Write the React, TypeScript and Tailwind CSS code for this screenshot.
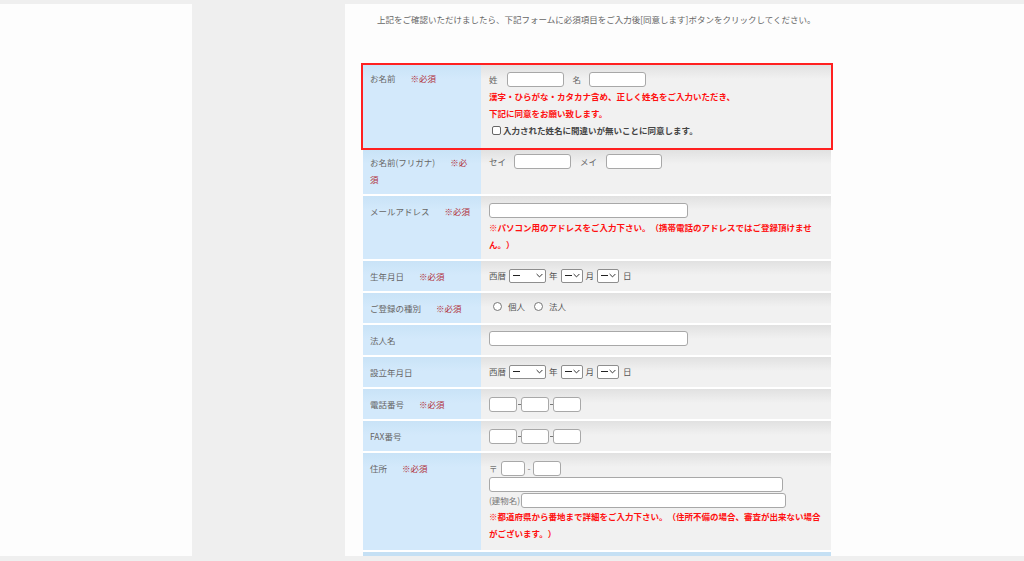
import React from "react";

type C = { children?: React.ReactNode };

const Inp = ({ cls }: { cls: string }) => (
  <span className={`inline-block h-[15px] shrink-0 rounded-[3px] border border-[#a8a8a8] bg-white ${cls}`} />
);

const Sel = ({ cls }: { cls: string }) => (
  <span className={`flex h-[14px] shrink-0 items-center justify-between rounded-[2px] border border-[#8e8e8e] bg-white pl-[3px] pr-[2px] ${cls}`}>
    <span className="h-[1.5px] w-[7px] bg-[#222]" />
    <svg width="7" height="5" viewBox="0 0 7 5">
      <path d="M0.6 1L3.5 3.9L6.4 1" stroke="#333" fill="none" strokeWidth="1" />
    </svg>
  </span>
);

const Req = () => <span className="ml-[15px] text-[#b0303a]">※必須</span>;

const Row = ({
  label,
  req,
  h,
  children,
  vcls = "",
  lcls = "pt-[7px]",
}: C & { label: string; req?: boolean; h: string; vcls?: string; lcls?: string }) => (
  <div className={`flex ${h}`}>
    <div className={`w-[118px] shrink-0 bg-[linear-gradient(#c9e3f7,#d3e9fb_14px)] pl-[7px] pr-[6px] leading-[17px] text-[#666] ${lcls}`}>
      {label}
      {req && <Req />}
    </div>
    <div className={`flex-1 bg-[linear-gradient(#e1e1e1,#f1f1f1_14px)] pl-[8px] pr-[8px] ${vcls}`}>{children}</div>
  </div>
);

const Red = ({ children }: C) => <div className="font-bold leading-[17px] text-[#ff1010]">{children}</div>;

const Dash = () => <span className="mx-[0.5px] h-px w-[3px] shrink-0 bg-[#777]" />;

const DateSel = () => (
  <div className="flex h-[17px] items-center text-[#555]">
    <span>西暦</span>
    <Sel cls="ml-[3px] w-[37px]" />
    <span className="ml-[3px]">年</span>
    <Sel cls="ml-[3px] w-[22px]" />
    <span className="ml-[3px]">月</span>
    <Sel cls="ml-[3px] w-[22px]" />
    <span className="ml-[4px]">日</span>
  </div>
);

const Radio = () => <span className="inline-block h-[9px] w-[9px] rounded-full border border-[#777] bg-white" />;

export default function App() {
  return (
    <div className="h-[561px] w-[1024px] overflow-hidden bg-[#efefef] pt-[4px] font-['Noto_Sans_CJK_JP','Noto_Sans',sans-serif] text-[8.5px] [text-spacing-trim:space-all]">
      <div className="flex h-[552px]">
        <div className="w-[192px] bg-[#fdfdfd]" />
        <div className="w-[153px]" />
        <div className="flex-1 overflow-hidden bg-[#fdfdfd]">
          <div className="pl-[32px] pt-[9px] leading-[12px] text-[#666]">
            上記をご確認いただけましたら、下記フォームに必須項目をご入力後[同意します]ボタンをクリックしてください。
          </div>
          <div className="ml-[18px] mt-[40px] flex w-[468px] flex-col gap-[2px] bg-white">
            <div className="outline-2 outline-[#ff2020]">
              <Row label="お名前" req h="h-[83px]" vcls="pt-[6px]" lcls="pt-[5px]">
                <div className="flex h-[17px] items-center text-[#666]">
                  <span>姓</span>
                  <Inp cls="ml-[9px] w-[57px]" />
                  <span className="ml-[9px]">名</span>
                  <Inp cls="ml-[8px] w-[57px]" />
                </div>
                <Red>漢字・ひらがな・カタカナ含め、正しく姓名をご入力いただき、</Red>
                <Red>下記に同意をお願い致します。</Red>
                <div className="flex h-[17px] items-center font-bold text-[#444]">
                  <span className="ml-[3px] mr-[2px] inline-block h-[9px] w-[9px] rounded-[2px] border border-[#666] bg-white" />
                  入力された姓名に間違いが無いことに同意します。
                </div>
              </Row>
            </div>
            <Row label="お名前(フリガナ)" req h="h-[44px]" vcls="pt-[4px]" lcls="pt-[4px]">
              <div className="flex h-[15px] items-center text-[#666]">
                <span>セイ</span>
                <Inp cls="ml-[8px] w-[57px]" />
                <span className="ml-[9px]">メイ</span>
                <Inp cls="ml-[9px] w-[56px]" />
              </div>
            </Row>
            <Row label="メールアドレス" req h="h-[63px]" vcls="pt-[7px]">
              <div className="flex h-[16px]">
                <Inp cls="w-[199px]" />
              </div>
              <Red>※パソコン用のアドレスをご入力下さい。（携帯電話のアドレスではご登録頂けません。）</Red>
            </Row>
            <Row label="生年月日" req h="h-[30px]" vcls="pt-[6px]">
              <DateSel />
            </Row>
            <Row label="ご登録の種別" req h="h-[30px]" vcls="pt-[5px]">
              <div className="flex h-[17px] items-center text-[#555]">
                <span className="ml-[4px]" />
                <Radio />
                <span className="ml-[6px]">個人</span>
                <span className="ml-[9px]" />
                <Radio />
                <span className="ml-[6px]">法人</span>
              </div>
            </Row>
            <Row label="法人名" h="h-[30px]" vcls="pt-[6px]">
              <div className="flex h-[16px]">
                <Inp cls="w-[199px]" />
              </div>
            </Row>
            <Row label="設立年月日" h="h-[30px]" vcls="pt-[6px]">
              <DateSel />
            </Row>
            <Row label="電話番号" req h="h-[30px]" vcls="pt-[7px]">
              <div className="flex h-[16px] items-center">
                <Inp cls="w-[28px]" />
                <Dash />
                <Inp cls="w-[28px]" />
                <Dash />
                <Inp cls="w-[28px]" />
              </div>
            </Row>
            <Row label="FAX番号" h="h-[30px]" vcls="pt-[7px]">
              <div className="flex h-[16px] items-center">
                <Inp cls="w-[28px]" />
                <Dash />
                <Inp cls="w-[28px]" />
                <Dash />
                <Inp cls="w-[28px]" />
              </div>
            </Row>
            <Row label="住所" req h="h-[97px]" vcls="pt-[7px]">
              <div className="flex h-[16px] items-center text-[#777]">
                <span>〒</span>
                <Inp cls="ml-[3px] w-[24px]" />
                <span className="ml-[3px]">-</span>
                <Inp cls="ml-[3px] w-[28px]" />
              </div>
              <div className="flex h-[16px] items-center">
                <Inp cls="w-[294px]" />
              </div>
              <div className="flex h-[16px] items-center text-[#777]">
                <span>(建物名)</span>
                <Inp cls="ml-px w-[265px]" />
              </div>
              <Red>※都道府県から番地まで詳細をご入力下さい。（住所不備の場合、審査が出来ない場合がございます。）</Red>
            </Row>
            <div className="h-[20px] bg-[#c5e0f4]" />
          </div>
        </div>
      </div>
    </div>
  );
}
